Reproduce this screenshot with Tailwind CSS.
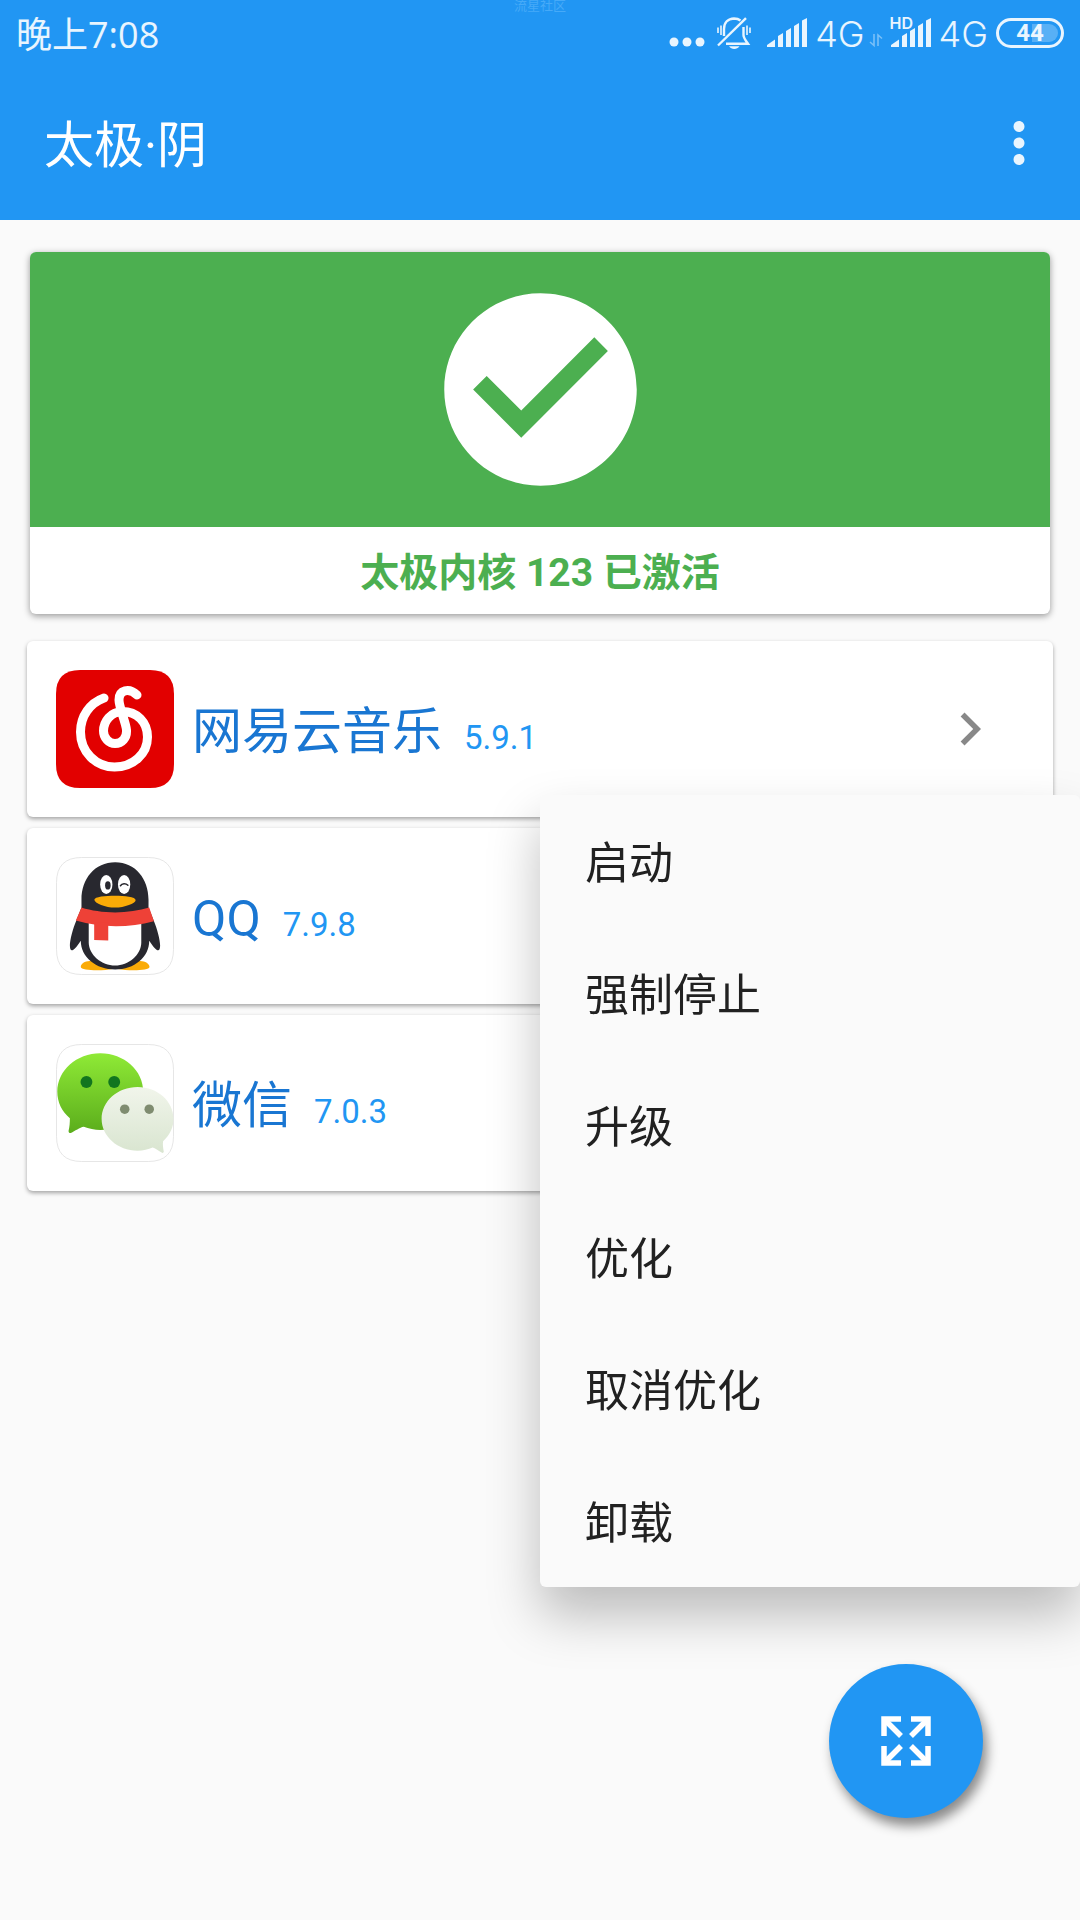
<!DOCTYPE html>
<html lang="zh-CN">
<head>
  <meta charset="UTF-8">
  <meta name="viewport" content="width=device-width, initial-scale=1">
  <title>太极·阴</title>
  <script src="https://cdn.jsdelivr.net/npm/@tailwindcss/browser@4"></script>
</head>
<body class="bg-[#fafafa] min-h-screen relative overflow-x-hidden font-['Roboto','Noto_Sans_CJK_SC',sans-serif]">

  <header class="bg-[#2196f3] text-white">
    <!-- 状态栏 -->
    <div class="relative flex items-center justify-between h-[66px] px-4 text-white/90">
      <span class="pt-1 text-[36px] leading-[66px] font-['Open_Sans','Noto_Sans_CJK_SC',sans-serif]">晚上7:08</span>
      <span class="absolute top-0 left-1/2 -translate-x-1/2 text-[13px] leading-3 text-[#46aaf8]">流星社区</span>

      <div class="flex items-center">
        <svg class="w-9 h-8 mr-3" viewBox="0 0 36 32" fill="currentColor">
          <circle cx="5" cy="25" r="4.5" /><circle cx="18" cy="25" r="4.5" /><circle cx="31" cy="25" r="4.5" />
        </svg>
        <svg class="w-[34px] h-8 mr-4" viewBox="0 0 34 32" fill="none" stroke="currentColor" stroke-width="2.4">
          <path d="M1 28.5L29 1.2" />
          <path d="M7 19V12C7 5.500 11 1.700 17 1.500C20 1.500 22 2.300 23.500 3.500" />
          <path d="M26.500 10V18C26.500 21 29 24 31 26.800H9" />
          <path d="M12 29.200H22.500C21 31 19.500 32 17.200 32S13.500 31 12 29.200Z" fill="currentColor" stroke="none" />
          <path d="M1 10.500V16M4 8.500V18M30 8.500V18M33 10.500V16" stroke-width="1.600" />
        </svg>
        <svg class="w-10 h-8 mr-2" viewBox="0 0 40 32" fill="currentColor">
          <path d="M0 30V28L8 22.500V30ZM11 30V19L16 16V30ZM19 30V14L24 11V30ZM27 30V9L32 6V30ZM35 30V3.500L40 1V30Z" />
        </svg>
        <span class="pt-0.5 text-[36px] leading-[66px] font-light font-['Inter',sans-serif]">4G</span>
        <svg class="w-[14px] h-8 ml-1 mr-2 text-white/40" viewBox="0 0 14 32" fill="none" stroke="currentColor" stroke-width="1.600">
          <path d="M5 17V28.500L1 25M9 29V18L13 21.500" />
        </svg>
        <div class="relative mr-2">
          <span class="absolute -left-px -top-0.5 text-[16px] leading-4 font-semibold font-['Inter',sans-serif]">HD</span>
          <svg class="w-10 h-8" viewBox="0 0 40 32" fill="currentColor">
            <path d="M0 30V28L8 22.500V30ZM11 30V19L16 16V30ZM19 30V14L24 11V30ZM27 30V9L32 6V30ZM35 30V3.500L40 1V30Z" />
          </svg>
        </div>
        <span class="pt-0.5 text-[36px] leading-[66px] font-light mr-2 font-['Inter',sans-serif]">4G</span>
        <div class="relative flex items-center justify-center w-[68px] h-[30px] rounded-full border-3 border-white/90">
          <span class="absolute right-[3px] top-[3px] w-[26px] h-[18px] rounded-r-full bg-white/25"></span>
          <span class="text-[24px] leading-6 font-bold">44</span>
        </div>
      </div>
    </div>

    <!-- 标题栏 -->
    <div class="flex items-center justify-between h-[154px] pl-11 pr-7">
      <h1 class="pt-1.5 text-[50px] leading-[60px]">太极·阴</h1>
      <button aria-label="更多" class="flex items-center justify-center w-[66px] h-[66px]">
        <svg class="w-[66px] h-[66px] text-white/90" viewBox="0 0 24 24" fill="currentColor">
          <path d="M12 8c1.100 0 2-.9 2-2s-.9-2-2-2-2 .9-2 2 .9 2 2 2zm0 2c-1.100 0-2 .9-2 2s.9 2 2 2 2-.9 2-2-.9-2-2-2zm0 6c-1.100 0-2 .9-2 2s.9 2 2 2 2-.9 2-2-.9-2-2-2z" />
        </svg>
      </button>
    </div>
  </header>

  <main class="relative pt-8">
    <!-- 激活状态 -->
    <section class="mx-[30px] rounded-md overflow-hidden bg-white text-[#4caf50] shadow-[0_2px_7px_rgba(0,0,0,0.4)]">
      <div class="flex items-center justify-center h-[275px] bg-[#4caf50]">
        <svg class="w-[231px] h-[231px] text-white" viewBox="0 0 24 24" fill="currentColor">
          <path d="M12 2C6.480 2 2 6.480 2 12s4.480 10 10 10 10-4.480 10-10S17.520 2 12 2zm-2 15l-5-5 1.410-1.410L10 14.170l7.590-7.590L19 8l-9 9z" />
        </svg>
      </div>
      <p class="h-[87px] text-center text-[39px] leading-[92px] font-bold">太极内核 123 已激活</p>
    </section>

    <!-- 应用列表 -->
    <ul class="mt-[27px] mx-[27px] flex flex-col gap-[11px]">
      <li>
        <a href="#" class="flex items-center h-44 pl-[29px] pr-[50px] rounded-md bg-white shadow-[0_2px_4px_rgba(0,0,0,0.35)]">
          <svg class="w-[118px] h-[118px] mr-[18px]" viewBox="0 0 118 118">
            <path d="M24 0H94Q118 0 118 24V94Q118 118 94 118H24Q0 118 0 94V24Q0 0 24 0Z" fill="#e20000" />
            <path d="M48 28C34 33 24.500 46 24.500 62C24.500 82 40 97 58.500 97C77 97 91.500 84 91.500 67C91.500 52 81 41.500 66 41.500C55 42 47.500 51 47.500 61C47.500 68 53 73.500 59 73.500C66 73.500 71 68 70.500 60C70 53 63 37 63 30C63 20 73 17.500 81 25" fill="none" stroke="#fff" stroke-width="9" stroke-linecap="round" />
          </svg>
          <div class="flex-1 flex items-baseline gap-[22px] pt-1.5">
            <span class="text-[50px] leading-[60px] text-[#1976d2]">网易云音乐</span>
            <span class="text-[33px] leading-[40px] text-[#2196f3]">5.9.1</span>
          </div>
          <svg class="w-[66px] h-[66px] text-[#888]" viewBox="0 0 24 24" fill="currentColor">
            <path d="M10 6L8.590 7.410 13.170 12l-4.580 4.590L10 18l6-6z" />
          </svg>
        </a>
      </li>
      <li>
        <a href="#" class="flex items-center h-44 pl-[29px] pr-[50px] rounded-md bg-white shadow-[0_2px_4px_rgba(0,0,0,0.35)]">
          <svg class="w-[118px] h-[118px] mr-[18px]" viewBox="0 0 119 119">
            <path d="M26 .5H93Q118.500 .5 118.500 26V93Q118.500 118.500 93 118.500H26Q.5 118.500 .5 93V26Q.5 .5 26 .5Z" fill="#fff" stroke="#e6e6e6" />
            <path d="M25 111C25 108 29 105 34 105H50L57 113C48 115 25 115 25 111ZM94.300 111C94.300 108 90 105 85 105H70L62.500 113C72 115 94.300 115 94.300 111Z" fill="#faab07" />
            <path d="M59.700 5.300C80 5.300 93.300 22 93.300 43V51L98.500 64C102 72 105 84 105 89C105 96 102 97 94 84.500C94 101 79 113.500 59.700 113.500S25 101 25 84.500C17 97 14 96 14 89C14 84 17 72 20.500 64L25.700 51V43C25.700 22 39 5.300 59.700 5.300Z" fill="#28282f" />
            <path d="M33 66H86V86C86 99 73 109.500 59.500 109.500S33 99 33 86Z" fill="#fff" />
            <path d="M25.700 51C45 57.500 74 57.500 94 51L98.700 64.700C73 71.500 46 71.500 20 64Z" fill="#ee4137" />
            <path d="M38.500 66H52.700V84.300L38.500 83.700Z" fill="#ee4137" />
            <path d="M38.700 43C38.700 40 50 39 59.500 39S80.300 40 80.300 43.500C80.300 46.500 69 51 59.500 51S38.700 46.500 38.700 43Z" fill="#faab07" />
            <ellipse cx="50.700" cy="27.700" rx="6.200" ry="9.500" fill="#fff" />
            <ellipse cx="68.700" cy="27.700" rx="6.200" ry="9.500" fill="#fff" />
            <ellipse cx="52.300" cy="28.700" rx="2.800" ry="4.200" fill="#28282f" />
            <path d="M65 29C66.500 26.500 70.500 26.500 72.500 28.500" fill="none" stroke="#28282f" stroke-width="1.500" stroke-linecap="round" />
          </svg>
          <div class="flex-1 flex items-baseline gap-[22px] pt-1.5">
            <span class="text-[50px] leading-[60px] text-[#1976d2]">QQ</span>
            <span class="text-[33px] leading-[40px] text-[#2196f3]">7.9.8</span>
          </div>
        </a>
      </li>
      <li>
        <a href="#" class="flex items-center h-44 pl-[29px] pr-[50px] rounded-md bg-white shadow-[0_2px_4px_rgba(0,0,0,0.35)]">
          <svg class="w-[118px] h-[118px] mr-[18px]" viewBox="0 0 119 119">
            <defs>
              <linearGradient id="green" x1="0" y1="0" x2="0" y2="1">
                <stop offset="0" stop-color="#8fea36" /><stop offset="1" stop-color="#5bad1c" />
              </linearGradient>
              <linearGradient id="pale" x1="0" y1="0" x2="0" y2="1">
                <stop offset="0" stop-color="#f1f5eb" /><stop offset="1" stop-color="#d9e5d0" />
              </linearGradient>
            </defs>
            <path d="M26 .5H93Q118.500 .5 118.500 26V93Q118.500 118.500 93 118.500H26Q.5 118.500 .5 93V26Q.5 .5 26 .5Z" fill="#fff" stroke="#e6e6e6" />
            <path d="M44.700 9.300C68.600 9.300 88 26.600 88 48S68.600 86.700 44.700 86.700C39 86.700 33 85.500 28 83.500C24 84 19 88 15 89.800C13.500 90 12.500 89 12.700 87.500C13.700 84 14 79 14 75C6 68 1.300 59 1.300 48C1.300 26.600 20.700 9.300 44.700 9.300Z" fill="url(#green)" />
            <path d="M82.300 43.300C102.300 43.300 118.500 57.700 118.500 75.500C118.500 84 115 92 108 98C107.500 101 108 105 108.700 108.500C108.500 110 107.500 110 106.500 109.500C103 108 100 105 97.500 104.500C93 106.500 88 107.700 82.300 107.700C62.300 107.700 46 93.300 46 75.500S62.300 43.300 82.300 43.300Z" fill="url(#pale)" />
            <g fill="#12751f"><circle cx="30.700" cy="38.300" r="6" /><circle cx="58.700" cy="38.300" r="6" /></g>
            <g fill="#7f8c70"><circle cx="69.300" cy="65.700" r="4.800" /><circle cx="94" cy="65.700" r="4.800" /></g>
          </svg>
          <div class="flex-1 flex items-baseline gap-[22px] pt-1.5">
            <span class="text-[50px] leading-[60px] text-[#1976d2]">微信</span>
            <span class="text-[33px] leading-[40px] text-[#2196f3]">7.0.3</span>
          </div>
        </a>
      </li>
    </ul>
  </main>

  <button aria-label="全屏" class="fixed right-[97px] bottom-[102px] flex items-center justify-center w-[154px] h-[154px] rounded-full bg-[#2196f3] text-white shadow-[4px_8px_12px_rgba(0,0,0,0.45)]">
    <svg class="w-[50px] h-[50px]" viewBox="0 0 50 50" fill="none" stroke="currentColor" stroke-width="5.500">
      <path d="M20 3H3V20M30 3H47V20M3 30V47H20M47 30V47H30" />
      <path d="M3 3L20 20M47 3L30 20M3 47L20 30M47 47L30 30" />
    </svg>
  </button>

  <!-- 弹出菜单 -->
  <menu class="absolute top-[795px] right-0 w-1/2 flex flex-col rounded-md bg-[#fafafa] text-[44px] leading-[64px] text-[#212121] shadow-[0_28px_52px_rgba(0,0,0,0.25)]">
    <li><button class="w-full h-[132px] px-[45px] pt-1.5 text-left">启动</button></li>
    <li><button class="w-full h-[132px] px-[45px] pt-1.5 text-left">强制停止</button></li>
    <li><button class="w-full h-[132px] px-[45px] pt-1.5 text-left">升级</button></li>
    <li><button class="w-full h-[132px] px-[45px] pt-1.5 text-left">优化</button></li>
    <li><button class="w-full h-[132px] px-[45px] pt-1.5 text-left">取消优化</button></li>
    <li><button class="w-full h-[132px] px-[45px] pt-1.5 text-left">卸载</button></li>
  </menu>

</body>
</html>
